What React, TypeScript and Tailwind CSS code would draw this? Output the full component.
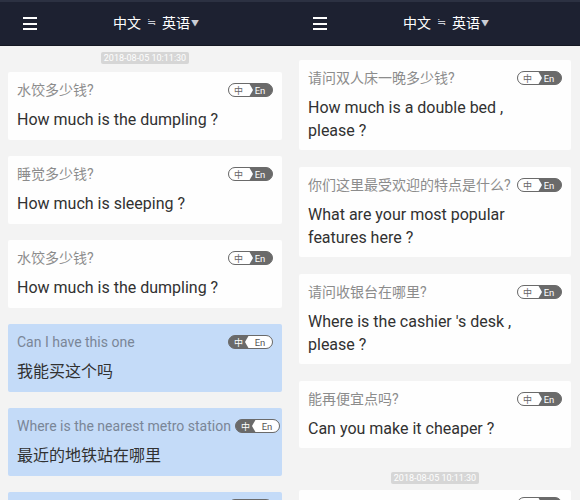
import React from "react";

type Item = {
  top: string;
  main: string;
  blue?: boolean;
};

const FONT = "font-['Roboto','Noto_Sans_CJK_SC',sans-serif]";

// Small 中/En switch drawn on the top-right of each bubble
function LangToggle({ reversed, bare }: { reversed?: boolean; bare?: boolean }) {
  const id = reversed ? "pillR" : "pillL";
  return (
    <svg width="45" height="14" viewBox="0 0 45 14" className="shrink-0">
      <defs>
        <clipPath id={id}>
          <rect x="0.5" y="0.5" width="44" height="13" rx="6.5" />
        </clipPath>
      </defs>
      <g clipPath={`url(#${id})`}>
        <rect x="0" y="0" width="45" height="14" fill="#6a6a6a" />
        {reversed ? (
          <polygon points="21,0 45,0 45,14 21,14 17,7" fill="#ffffff" />
        ) : (
          <polygon points="0,0 21,0 25,7 21,14 0,14" fill="#ffffff" />
        )}
      </g>
      <rect x="0.5" y="0.5" width="44" height="13" rx="6.5" fill="none" stroke="#6a6a6a" strokeWidth="1" />
      {!bare && (
        <>
          <text
            x="10.5"
            y="10.5"
            textAnchor="middle"
            fontSize="9"
            fontFamily="'Noto Sans CJK SC', sans-serif"
            fill={reversed ? "#ffffff" : "#666666"}
          >
            中
          </text>
          <text
            x="32"
            y="10.5"
            textAnchor="middle"
            fontSize="9.5"
            fontFamily="Roboto, sans-serif"
            fill={reversed ? "#555555" : "#ffffff"}
          >
            En
          </text>
        </>
      )}
    </svg>
  );
}

function Bubble({ item, tight }: { item: Item; tight?: boolean }) {
  return (
    <div
      className={`rounded-[2px] pt-[9px] pl-[9px] pr-[9px] ${tight ? "pb-[8px]" : "pb-[9px]"} ${
        item.blue ? "bg-[#c4dbf8]" : "bg-[#fefefe]"
      }`}
    >
      <div className="flex h-[18px] items-center justify-between gap-1">
        <span
          className={`text-[14px] leading-[18px] whitespace-nowrap ${
            item.blue ? "text-[#7a8697]" : "text-[#8c8c8c]"
          }`}
        >
          {item.top}
        </span>
        <LangToggle reversed={item.blue} />
      </div>
      <div className="mt-[9px] pr-[12px] text-[16px] leading-[23px] text-[#313131]">
        {item.main}
      </div>
    </div>
  );
}

// bubble that is cut by the bottom of the screen: only its top edge shows
function CutBubble({ blue }: { blue?: boolean }) {
  return (
    <div
      className={`flex h-[60px] justify-end rounded-[2px] pt-[7px] pr-[9px] ${
        blue ? "bg-[#c4dbf8]" : "bg-[#fefefe]"
      }`}
    >
      <LangToggle reversed={blue} bare />
    </div>
  );
}

function Stamp() {
  return (
    <div className="flex justify-center">
      <span className="rounded-[2px] bg-[#d6d6d6] px-[3px] text-[9px] leading-[12px] text-white">
        2018-08-05 10:11:30
      </span>
    </div>
  );
}

function TopBar() {
  return (
    <div className="relative flex h-[46px] shrink-0 items-center border-t-2 border-b border-t-[#2c3142] border-b-[#141722] bg-[#1d2131]">
      <div className="ml-[23px] flex w-[14px] flex-col gap-[3.5px]">
        <span className="h-[2px] w-full bg-white" />
        <span className="h-[2px] w-full bg-white" />
        <span className="h-[2px] w-full bg-white" />
      </div>
      <div className="absolute left-[113px] flex items-center text-[14px] text-white">
        <span>中文</span>
        <span className="mx-[6px] text-[11px] text-[#c9ccd4]">≒</span>
        <span>英语</span>
        <span className="ml-[1px] text-[8px] text-[#c9ccd4]">▼</span>
      </div>
    </div>
  );
}

const leftItems: Item[] = [
  { top: "水饺多少钱?", main: "How much is the dumpling ?" },
  { top: "睡觉多少钱?", main: "How much is sleeping ?" },
  { top: "水饺多少钱?", main: "How much is the dumpling ?" },
  { top: "Can I have this one", main: "我能买这个吗", blue: true },
  { top: "Where is the nearest metro station", main: "最近的地铁站在哪里", blue: true },
];

const rightItems: Item[] = [
  { top: "请问双人床一晚多少钱?", main: "How much is a double bed , please ?" },
  { top: "你们这里最受欢迎的特点是什么?", main: "What are your most popular features here ?" },
  { top: "请问收银台在哪里?", main: "Where is the cashier 's desk , please ?" },
  { top: "能再便宜点吗?", main: "Can you make it cheaper ?" },
];

export default function App() {
  return (
    <div className={`flex h-[500px] w-[580px] overflow-hidden bg-[#f3f3f3] ${FONT}`}>
      {/* left phone */}
      <div className="flex h-full w-[290px] flex-col overflow-hidden">
        <TopBar />
        <div className="flex flex-col px-[8px] pt-[6px]">
          <Stamp />
          <div className="mt-[8px] flex flex-col gap-[16px]">
            {leftItems.map((it, i) => (
              <Bubble key={i} item={it} />
            ))}
            <CutBubble blue />
          </div>
        </div>
      </div>

      {/* right phone */}
      <div className="flex h-full w-[290px] flex-col overflow-hidden">
        <TopBar />
        <div className="flex flex-col px-[9px] pt-[14px]">
          <div className="flex flex-col gap-[17px]">
            {rightItems.map((it, i) => (
              <Bubble key={i} item={it} tight />
            ))}
          </div>
          <div className="mt-[24px]">
            <Stamp />
          </div>
          <div className="mt-[6px]">
            <CutBubble />
          </div>
        </div>
      </div>
    </div>
  );
}
